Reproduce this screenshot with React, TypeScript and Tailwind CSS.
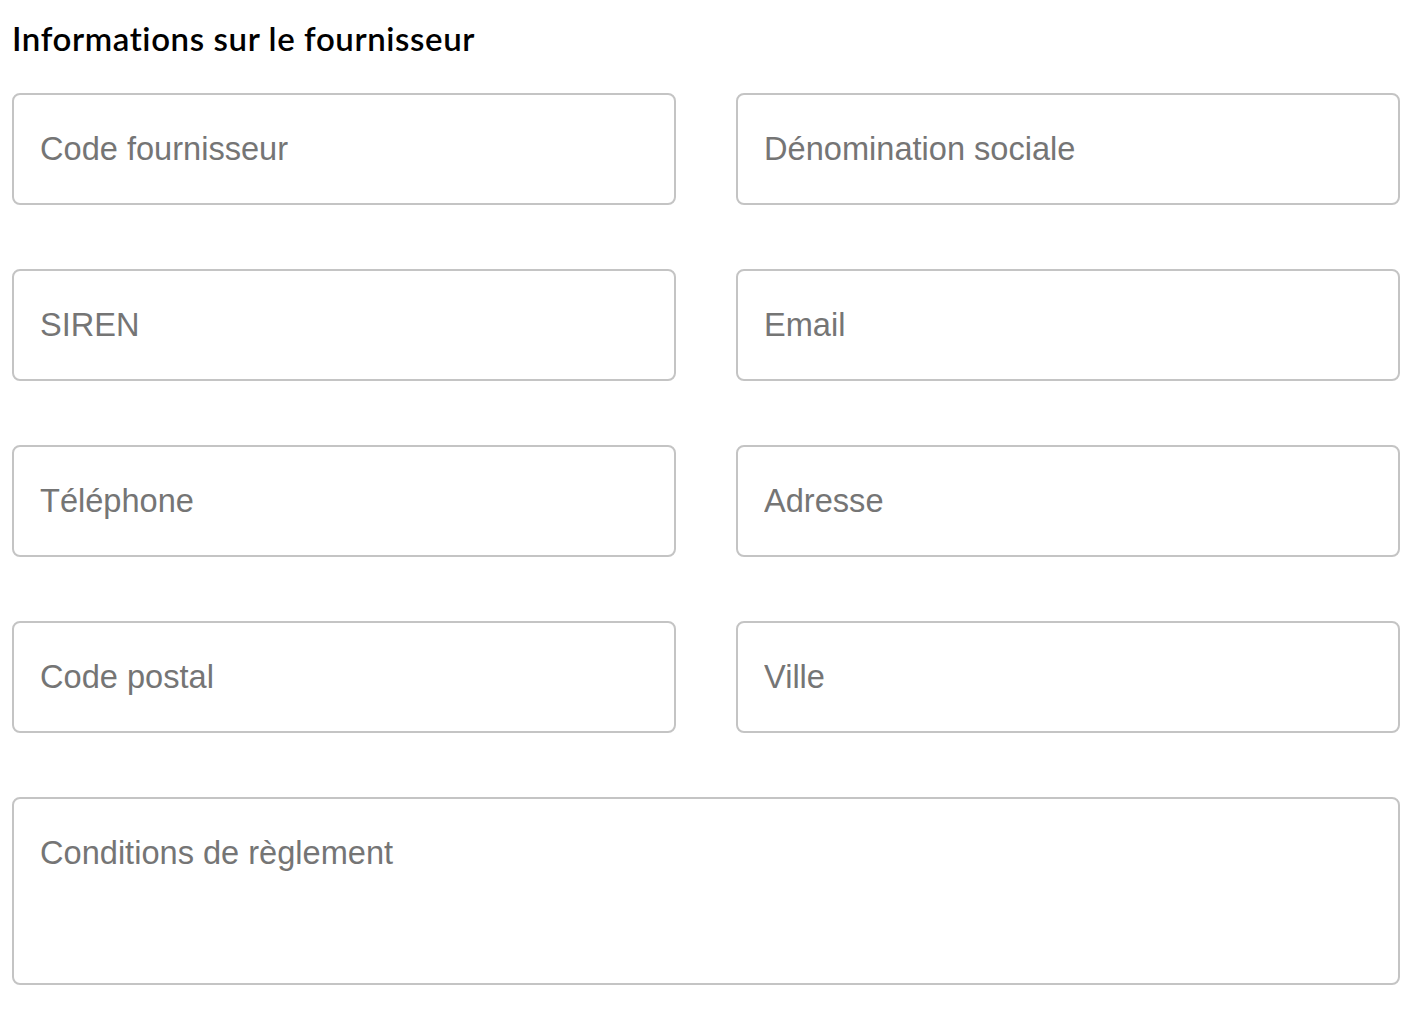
import React from 'react';

const fields = [
  'Code fournisseur',
  'Dénomination sociale',
  'SIREN',
  'Email',
  'Téléphone',
  'Adresse',
  'Code postal',
  'Ville',
];

const inputClass =
  'w-full h-[112px] rounded-[8px] border-2 border-[#c4c4c4] bg-white px-[26px] text-[32.6px] text-[#333] placeholder:text-[#757575] outline-none';

const App: React.FC = () => {
  return (
    <div className="min-h-screen bg-white pl-[12px] pr-[18px] pt-[14px]">
      <h2 className="mb-[31px] font-['Lato','Noto_Sans',sans-serif] text-[33px] font-semibold leading-[48px] tracking-[0.6px] text-black [font-variant-ligatures:none]">
        Informations sur le fournisseur
      </h2>
      <div className="grid grid-cols-2 gap-x-[60px] gap-y-[64px] font-['Liberation_Sans',Arial,sans-serif]">
        {fields.map((f) => (
          <input key={f} type="text" placeholder={f} className={inputClass} />
        ))}
        <textarea
          placeholder="Conditions de règlement"
          className="col-span-2 h-[188px] resize-none rounded-[8px] border-2 border-[#c4c4c4] bg-white px-[26px] pt-[34px] text-[32.6px] leading-[40px] text-[#333] placeholder:text-[#757575] outline-none"
        />
      </div>
    </div>
  );
};

export default App;
